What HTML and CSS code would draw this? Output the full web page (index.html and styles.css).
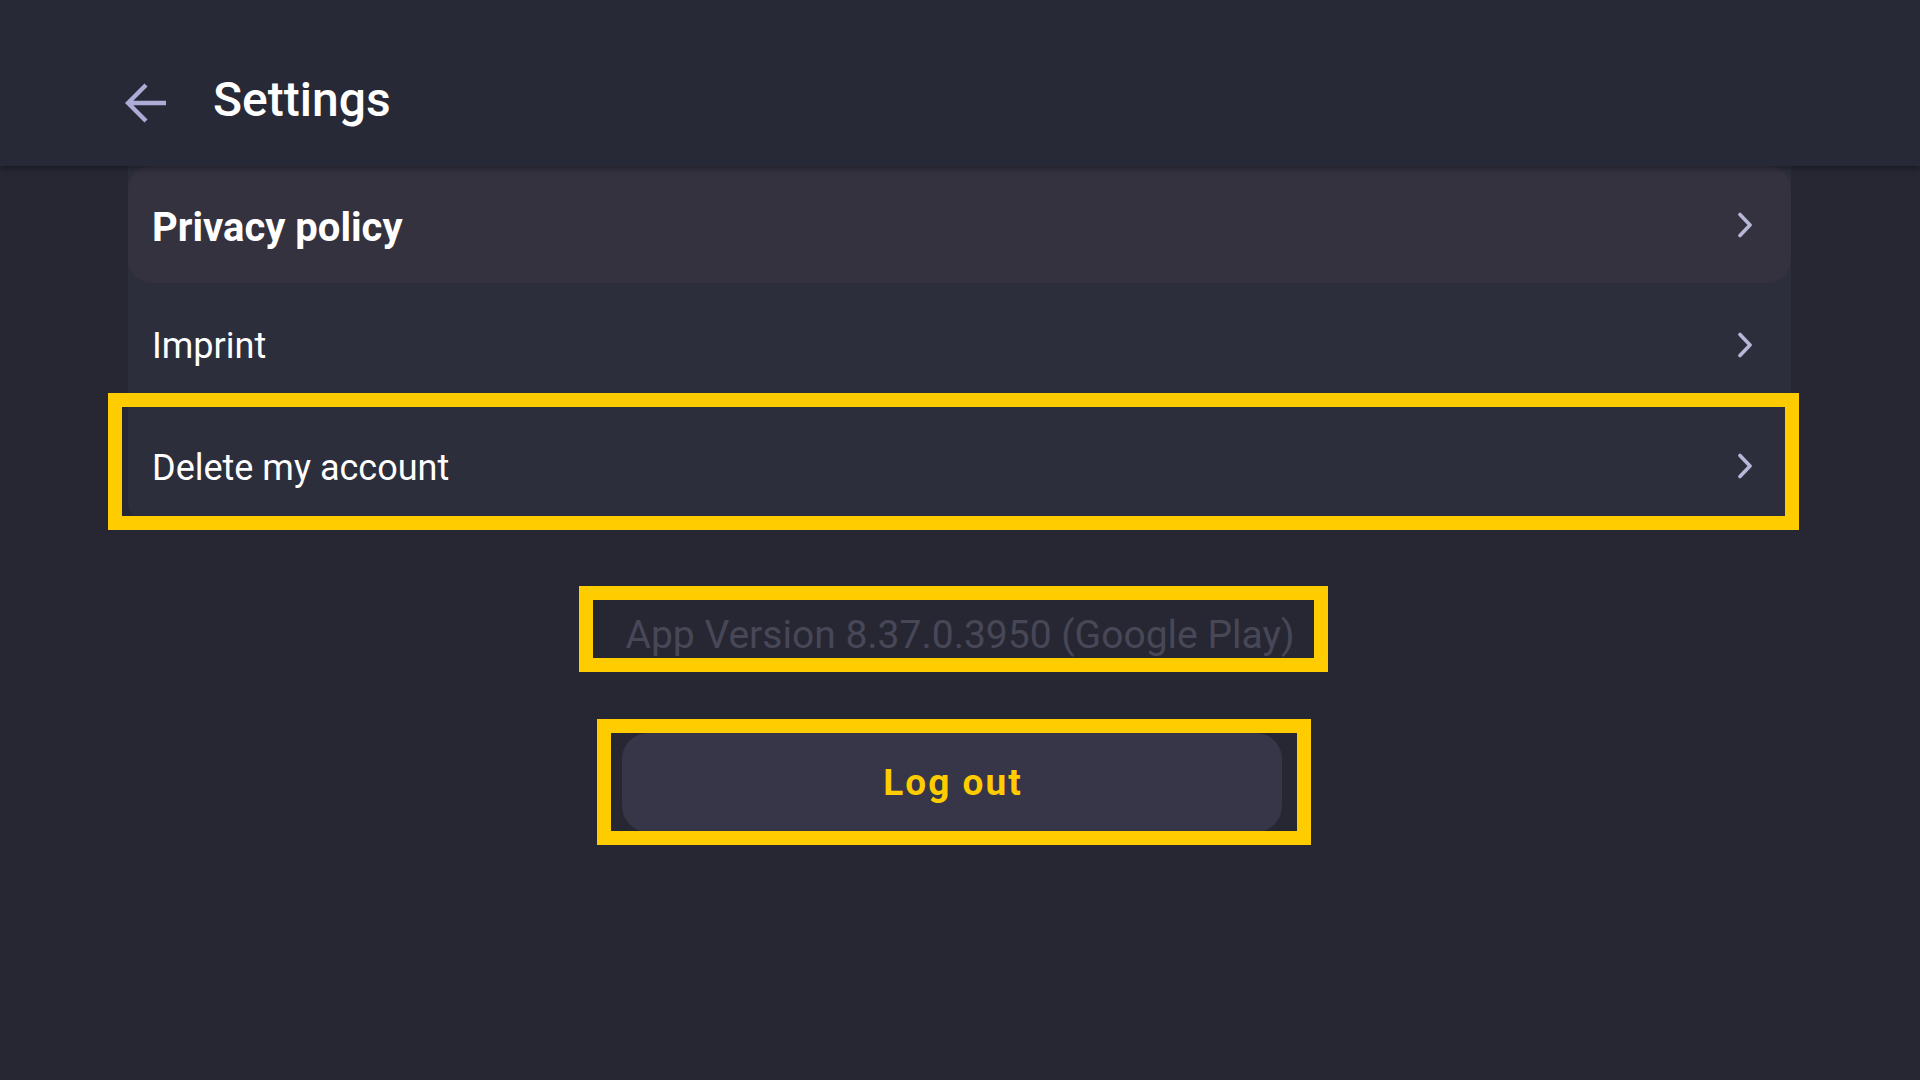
FILE: index.html
```html
<!DOCTYPE html>
<html lang="en">
<head>
<meta charset="utf-8">
<title>Settings</title>
<link rel="stylesheet" href="styles.css">
</head>
<body>
<header class="topbar">
  <svg class="back" viewBox="0 0 42 42" width="42" height="42" aria-hidden="true">
    <path d="M41 21H4M21 3L3 21L21 39" fill="none" stroke="#adacd6" stroke-width="4.4" stroke-linecap="butt" stroke-linejoin="miter"/>
  </svg>
  <h1 class="title">Settings</h1>
</header>
<main class="content">
  <section class="list">
    <div class="row row-active">
      <span class="label label-bold">Privacy policy</span>
      <svg class="chev" viewBox="0 0 16 26" width="16" height="26" aria-hidden="true"><path d="M3 2.5L13 13L3 23.5" fill="none" stroke="#b7b7d8" stroke-width="3.6" stroke-linecap="round" stroke-linejoin="round"/></svg>
    </div>
    <div class="row row-imprint">
      <span class="label label-imprint">Imprint</span>
      <svg class="chev" viewBox="0 0 16 26" width="16" height="26" aria-hidden="true"><path d="M3 2.5L13 13L3 23.5" fill="none" stroke="#b7b7d8" stroke-width="3.6" stroke-linecap="round" stroke-linejoin="round"/></svg>
    </div>
    <div class="row row-delete">
      <span class="label label-delete">Delete my account</span>
      <svg class="chev" viewBox="0 0 16 26" width="16" height="26" aria-hidden="true"><path d="M3 2.5L13 13L3 23.5" fill="none" stroke="#b7b7d8" stroke-width="3.6" stroke-linecap="round" stroke-linejoin="round"/></svg>
      <div class="hl hl-delete"></div>
    </div>
  </section>
  <div class="version-wrap">
    <p class="version">App Version 8.37.0.3950 (Google Play)</p>
    <div class="hl hl-version"></div>
  </div>
  <div class="logout-line">
    <div class="logout-wrap">
      <button class="logout">Log out</button>
      <div class="hl hl-logout"></div>
    </div>
  </div>
</main>
</body>
</html>
```
FILE: styles.css
```css
html, body {
  margin: 0;
  padding: 0;
}
body {
  width: 1920px;
  height: 1080px;
  overflow: hidden;
  background: #262733;
  font-family: Roboto, "Liberation Sans", sans-serif;
  color: #ffffff;
}
.topbar {
  position: relative;
  z-index: 2;
  height: 166px;
  box-sizing: border-box;
  padding: 34px 0 0 125px;
  display: flex;
  align-items: center;
  background: #272936;
  box-shadow: 0 3px 6px rgba(0, 0, 0, 0.32);
}
.back {
  display: block;
  margin-top: 6px;
}
.title {
  margin: 0 0 0 46px;
  font-size: 48px;
  font-weight: 500;
  line-height: 56px;
  color: #ffffff;
}
.content {
  position: relative;
  z-index: 1;
}
.list {
  margin: 0 129px 0 128px;
  background: #2d2e3c;
  border-radius: 0 0 24px 24px;
  display: flex;
  flex-direction: column;
}
.row {
  position: relative;
  box-sizing: border-box;
  padding: 0 38px 0 24px;
  display: flex;
  align-items: center;
  justify-content: space-between;
}
.row-active {
  height: 117px;
  background: #34323f;
  border-radius: 24px;
}
.row-imprint {
  height: 124px;
}
.row-delete {
  height: 118px;
}
.label {
  font-size: 36px;
  font-weight: 400;
  color: #ffffff;
}
.label-bold {
  font-size: 40px;
  font-weight: 700;
  margin-top: 6px;
}
.label-imprint {
  margin-top: 2px;
}
.label-delete {
  margin-top: 4px;
}
.chev {
  display: block;
}
.hl {
  position: absolute;
  border: 14px solid #ffcc00;
  box-sizing: border-box;
  pointer-events: none;
}
.hl-delete {
  left: -20px;
  right: -8px;
  top: -14px;
  height: 137px;
}
.version-wrap {
  position: relative;
  width: fit-content;
  margin: 87px auto 0;
}
.version {
  margin: 0;
  font-size: 39px;
  line-height: 46px;
  color: #484757;
  white-space: nowrap;
}
.hl-version {
  left: -47px;
  right: -34px;
  top: -26px;
  bottom: -14px;
}
.logout-line {
  display: flex;
  justify-content: center;
  padding-right: 16px;
  margin-top: 75px;
}
.logout-wrap {
  position: relative;
}
.logout {
  display: block;
  width: 660px;
  height: 99px;
  border: none;
  border-radius: 26px;
  background: #363648;
  color: #ffcc00;
  font-family: Roboto, "Liberation Sans", sans-serif;
  font-size: 37px;
  font-weight: 700;
  letter-spacing: 2px;
  padding: 0 0 0 2px;
}
.hl-logout {
  left: -25px;
  right: -29px;
  top: -14px;
  bottom: -13px;
}
```
